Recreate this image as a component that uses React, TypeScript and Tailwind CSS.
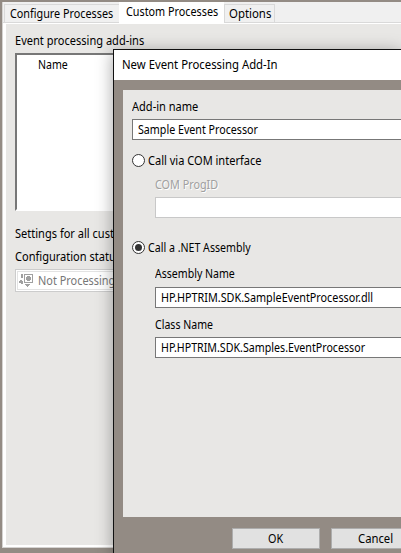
import type { ReactNode } from "react";

function Text({ className = "scale-x-[0.9]", children }: { className?: string; children: ReactNode }) {
  return <div className={`h-4 w-max shrink-0 origin-left whitespace-nowrap leading-[17px] ${className}`}>{children}</div>;
}

function Field({ className = "", children }: { className?: string; children?: ReactNode }) {
  return <div className={`h-[21px] shrink-0 border border-r-0 bg-white pl-[5px] pt-px ${className}`}>{children}</div>;
}

function Radio({ checked = false }: { checked?: boolean }) {
  return (
    <span className="mt-[2px] flex size-[13px] shrink-0 items-center justify-center rounded-full border border-[#333] bg-white">
      {checked && <span className="size-[7px] rounded-full bg-[#333]" />}
    </span>
  );
}

function ProcessIcon() {
  return (
    <svg width="15" height="14" viewBox="0 0 15 14" fill="#a0a0a0" className="mt-[2px] shrink-0">
      <path d="M2 0h2v4H2zM0 7h1V6h2v1h1v3H2V9H0zM6 10h5v1h-1v1H9v1H8v-1H7v-1H6z" />
      <path fillRule="evenodd" d="M5 0h9v9H5zM6 1v7h7V1z" />
      <path d="M8 2h3v1h1v3h-1v1H8V6H7V3h1z" />
    </svg>
  );
}

function Dialog() {
  return (
    <div className="absolute left-[113px] top-[49px] flex h-[504px] w-[288px] flex-col border-l border-t border-[#111] bg-[#938b84] shadow-[0_3px_16px_rgba(0,0,0,0.36)]">
      <div className="h-[30px] shrink-0 bg-white pl-[8px] pt-[6px]">
        <Text className="scale-x-[0.945]">New Event Processing Add-In</Text>
      </div>
      <div className="ml-[9px] mt-[10px] flex h-[427px] shrink-0 flex-col bg-[#e8e7e5] pl-[9px] pt-[8px]">
        <Text className="scale-x-[0.92]">Add-in name</Text>
        <Field className="mt-[5px] border-[#777]"><Text className="scale-x-[0.89]">Sample Event Processor</Text></Field>
        <div className="mt-[12px] flex h-4 shrink-0 gap-[3px]">
          <Radio />
          <Text className="scale-x-[0.92]">Call via COM interface</Text>
        </div>
        <div className="flex flex-col pl-[23px] pt-[8px]">
          <Text className="scale-x-[0.9] text-[#a0a0a0] [text-shadow:1px_1px_0_white]">COM ProgID</Text>
          <Field className="mt-[5px] border-[#c8c8c8]" />
        </div>
        <div className="mt-[21px] flex h-4 shrink-0 gap-[3px]">
          <Radio checked />
          <Text className="scale-x-[0.885]">Call a .NET Assembly</Text>
        </div>
        <div className="flex flex-col pl-[23px] pt-[10px]">
          <Text className="scale-x-[0.88]">Assembly Name</Text>
          <Field className="mt-[6px] border-[#777]"><Text>HP.HPTRIM.SDK.SampleEventProcessor.dll</Text></Field>
          <Text className="mt-[8px] scale-x-[0.88]">Class Name</Text>
          <Field className="mt-[5px] border-[#777]"><Text className="scale-x-[0.888]">HP.HPTRIM.SDK.Samples.EventProcessor</Text></Field>
        </div>
      </div>
      <div className="flex gap-[11px] overflow-hidden pl-[118px] pt-[11px]">
        <button className="flex h-[21px] w-[88px] shrink-0 justify-center border border-[#adadad] bg-[#e1e1e1] pt-px"><Text>OK</Text></button>
        <button className="flex h-[21px] w-[88px] shrink-0 justify-center border border-[#adadad] bg-[#e1e1e1] pl-[3px] pt-px"><Text className="scale-x-[0.94]">Cancel</Text></button>
      </div>
    </div>
  );
}

export default function App() {
  return (
    <div className="relative h-[553px] w-[401px] overflow-hidden bg-[#938b84] pl-[2px] pt-[2px] font-['Noto_Sans',sans-serif] text-[12px] text-black">
      <div className="flex h-[546px] flex-col border-b border-l border-[#d5d3d1] bg-[#f0f0f0]">
        <div className="flex h-[21px] shrink-0 items-end border-b border-[#d9d9d9] pl-px">
          <div className="h-[18px] w-[115px] shrink-0 border-l border-t border-[#d9d9d9] pl-[5px]"><Text>Configure Processes</Text></div>
          <div className="-mb-px h-[21px] w-[105px] shrink-0 bg-white pl-[7px] pt-px"><Text>Custom Processes</Text></div>
          <div className="h-[18px] w-[51px] shrink-0 border border-b-0 border-[#d9d9d9] pl-[4px]"><Text className="scale-x-[0.95]">Options</Text></div>
        </div>
        <div className="flex h-[524px] flex-col border-b-2 border-l-[3px] border-t border-white bg-[#e8e7e5] pl-[9px] pt-[8px]">
          <Text className="scale-x-[0.92]">Event processing add-ins</Text>
          <div className="mt-[5px] h-[158px] w-[150px] shrink-0 border-2 border-[#777] border-b-white bg-white pl-[21px] pt-px"><Text className="scale-x-[0.88]">Name</Text></div>
          <Text className="mt-[14px] scale-x-[0.92]">Settings for all cust</Text>
          <Text className="mt-[7px] scale-x-[0.92]">Configuration statu</Text>
          <div className="mt-[5px] flex h-[23px] w-[180px] shrink-0 border border-[#ccc] bg-white p-px">
            <div className="flex w-full gap-[4px] border border-[#e3e3e3] pl-px">
              <ProcessIcon />
              <Text className="scale-x-[0.91] text-[#777]">Not Processing</Text>
            </div>
          </div>
        </div>
      </div>
      <Dialog />
    </div>
  );
}
